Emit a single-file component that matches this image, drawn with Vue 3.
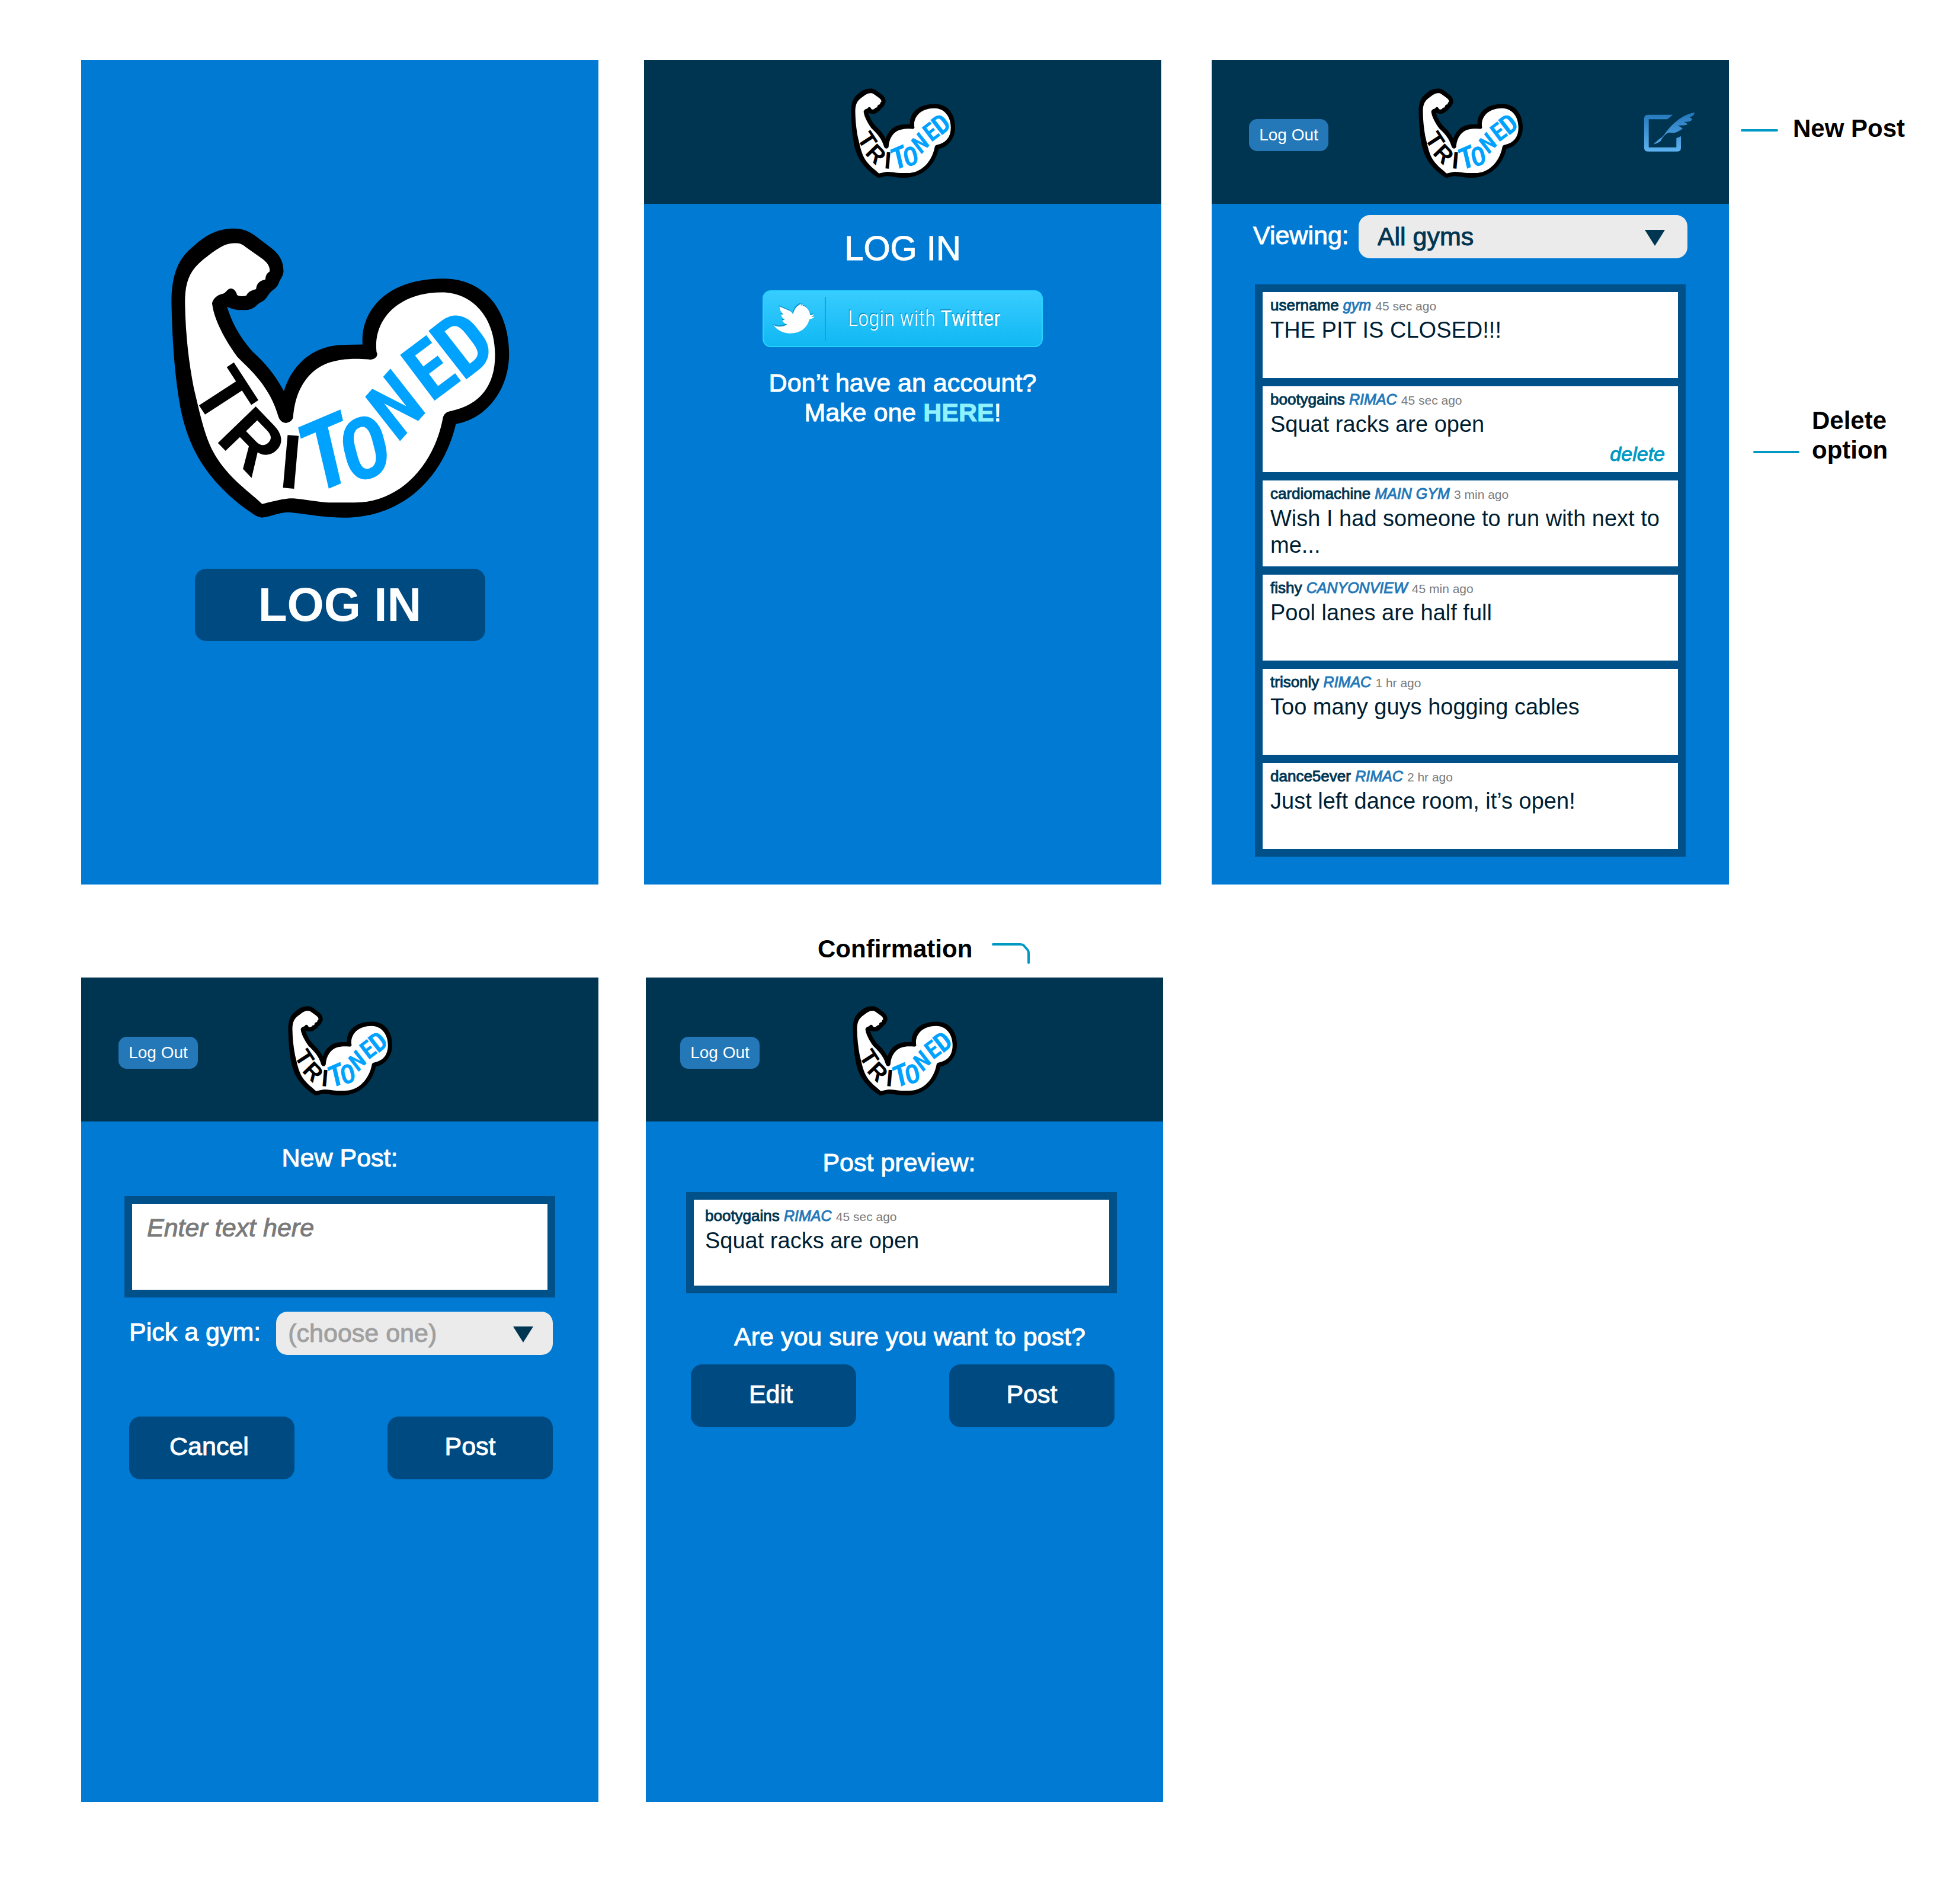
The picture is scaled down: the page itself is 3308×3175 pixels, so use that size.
<script setup>
import { h, ref } from 'vue'

const posts = [
  { user: 'username', gym: 'gym', time: '45 sec ago', text: 'THE PIT IS CLOSED!!!' },
  { user: 'bootygains', gym: 'RIMAC', time: '45 sec ago', text: 'Squat racks are open', own: true },
  { user: 'cardiomachine', gym: 'MAIN GYM', time: '3 min ago', text: 'Wish I had someone to run with next to me...' },
  { user: 'fishy', gym: 'CANYONVIEW', time: '45 min ago', text: 'Pool lanes are half full' },
  { user: 'trisonly', gym: 'RIMAC', time: '1 hr ago', text: 'Too many guys hogging cables' },
  { user: 'dance5ever', gym: 'RIMAC', time: '2 hr ago', text: 'Just left dance room, it’s open!' },
]
const preview = posts[1]
const gyms = ['RIMAC', 'MAIN GYM', 'CANYONVIEW']
const filter = ref('')
const chosenGym = ref('')
const draft = ref('')

const OUTLINE =
  'M330,75C375,75 400,95 420,112L490,175C520,205 537,240 535,290C533,310 520,325 515,345C505,372 485,375 470,405C455,435 440,432 425,450C405,475 385,474 370,474C340,476 320,468 302,458C320,530 350,600 405,675C460,735 500,790 537,872C570,740 660,645 790,645L862,643C852,480 960,320 1195,320C1370,320 1468,480 1468,690C1468,870 1370,1010 1248,1033C1200,1280 1040,1492 785,1492C700,1492 640,1475 560,1466C510,1466 480,1490 445,1492C425,1490 400,1465 380,1450C200,1290 140,1130 110,960C85,800 75,620 72,440C72,300 100,220 165,160C220,100 270,75 330,75Z'
const FILL =
  'M330,147C350,145 365,150 378,165L450,225C470,245 480,262 478,285C465,295 462,305 460,325C445,328 425,335 422,372C405,378 390,382 382,403C370,408 350,408 343,400C340,380 325,365 312,370C300,376 298,388 285,394C265,398 245,415 240,440C245,500 275,590 345,705C400,770 480,850 515,1000C522,1020 535,1028 545,1028C560,1026 573,1015 575,1000C580,920 600,840 655,780C700,730 770,705 885,716C910,722 930,700 920,680C905,520 1010,388 1190,388C1310,388 1408,500 1410,690C1412,840 1350,940 1225,970C1205,975 1200,985 1195,1000C1160,1230 1020,1418 830,1418L720,1418C650,1412 600,1395 555,1398C520,1402 480,1415 447,1425C400,1370 320,1310 260,1200C210,1110 190,980 165,860C145,740 130,600 128,440C128,330 150,280 200,230C245,190 285,147 330,147Z'
const WIDE = '"Liberation Sans", Arial, sans-serif'
const SLIM = '"Roboto Condensed", "Liberation Sans Narrow", "Liberation Sans", sans-serif'
const LETTERS = [
  ['T', 53, 308, 57, 129, 'black'],
  ['R', 106, 391, 46, 129, 'black'],
  ['I', 199, 440, 5, 130, 'black'],
  ['T', 285, 433, -23, 162, 'blue', true],
  ['O', 346, 419, -23, 142, 'blue', true],
  ['N', 413, 332, -48, 132, 'blue', true],
  ['E', 466, 277, -37, 136, 'blue'],
  ['D', 525, 236, -38, 146, 'blue'],
]
const Logo = () =>
  h('svg', { viewBox: '0 0 571 490', role: 'img', 'aria-label': 'TriToned', overflow: 'visible' }, [
    h('g', { transform: 'translate(-28 -24) scale(0.40816 0.34435)' }, [
      h('path', { d: OUTLINE, fill: '#000' }),
      h('path', { d: FILL, fill: '#fff' }),
    ]),
    ...LETTERS.map(([ch, x, y, angle, size, tone, slanted]) =>
      h('text', {
        x: 0, y: 0, 'text-anchor': 'middle', 'font-weight': 700, 'font-size': size,
        'font-family': tone === 'blue' ? SLIM : WIDE,
        'font-style': slanted ? 'italic' : 'normal',
        fill: tone === 'blue' ? '#00a2ff' : '#000',
        transform: `translate(${x} ${y}) rotate(${angle})`,
      }, ch)),
  ])
</script>

<template>
  <main class="board">
    <div class="row first">
      <section class="screen splash" aria-label="Welcome">
        <Logo class="logo-large" />
        <button type="button" class="login">LOG IN</button>
      </section>

      <section class="screen signin" aria-label="Log in">
        <header class="bar"><Logo class="logo" /></header>
        <h1>LOG IN</h1>
        <button type="button" class="twitter">
          <svg class="bird" viewBox="78 95 210 152" aria-hidden="true">
            <path fill="#fff" d="M78,203C95,214 125,216 148,200C130,194 124,186 124,178L136,176C122,166 117,158 118,148L130,150C116,138 110,124 108,108L160,130C168,134 174,140 178,148C184,126 195,102 222,95L218,104L232,97L226,106L234,106C252,114 262,130 266,152L286,150C282,156 278,158 272,160L288,161C282,168 272,172 262,174C250,222 212,247 160,246C125,245 95,228 78,203Z" />
          </svg>
          <span class="twitter-text">Login with <b>Twitter</b></span>
        </button>
        <p class="lead">Don’t have an account?<br />Make one <a href="#signup">HERE</a>!</p>
      </section>

      <section class="screen feed" aria-label="Feed">
        <header class="bar">
          <button type="button" class="logout">Log Out</button>
          <Logo class="logo" />
          <button type="button" class="compose" aria-label="New post">
            <svg viewBox="48 27 255 198" aria-hidden="true">
              <defs>
                <linearGradient id="quill" gradientUnits="userSpaceOnUse" x1="0" y1="27" x2="0" y2="225">
                  <stop offset="0" stop-color="#2377bb" />
                  <stop offset="1" stop-color="#5db2f0" />
                </linearGradient>
              </defs>
              <g fill="url(#quill)">
                <path d="M193,38H66Q48,38 48,56V206Q48,224 66,224H216Q234,224 234,206V147L211,157V203H71V61H165Z" />
                <path d="M303,27C262,32 215,62 180,100C160,122 152,138 140,150C122,162 108,175 95,188C110,184 122,178 132,170C140,152 160,128 178,128C186,130 196,128 204,129C216,124 232,118 243,108C236,102 230,98 218,92C232,92 250,93 266,88C268,82 258,78 250,74C262,74 275,74 285,68C292,64 290,60 288,57L277,50C290,48 302,40 303,27Z" />
              </g>
            </svg>
          </button>
        </header>
        <div class="content">
          <div class="filter">
            <label for="filter">Viewing:</label>
            <span class="picker">
              <select id="filter" v-model="filter">
                <option value="">All gyms</option>
                <option v-for="g in gyms" :key="g">{{ g }}</option>
              </select>
              <svg class="arrow" viewBox="0 0 34 27" aria-hidden="true"><path d="M0,0H34L17,27Z" fill="#003652" /></svg>
            </span>
          </div>
          <ul class="posts">
            <li v-for="post in posts" :key="post.user" class="post">
              <p class="meta"><span class="user">{{ post.user }}</span> <em class="gym">{{ post.gym }}</em> <small>{{ post.time }}</small></p>
              <p class="text">{{ post.text }}</p>
              <button v-if="post.own" type="button" class="delete">delete</button>
            </li>
          </ul>
        </div>
      </section>

      <aside class="notes">
        <p class="note new-post"><i class="line"></i>New Post</p>
        <p class="note delete-option"><i class="line"></i><span>Delete<br />option</span></p>
      </aside>
    </div>

    <div class="row second">
      <p class="note confirmation">
        Confirmation
        <svg class="elbow" viewBox="0 0 64 36" aria-hidden="true">
          <path d="M2,3H48Q52,3 54,5L60,12Q62,14 62,18V34" fill="none" stroke="#0099c3" stroke-width="4" stroke-linecap="round" />
        </svg>
      </p>

      <section class="screen compose-screen" aria-label="New post">
        <header class="bar">
          <button type="button" class="logout">Log Out</button>
          <Logo class="logo" />
        </header>
        <form class="content" @submit.prevent>
          <h2><label for="draft">New Post:</label></h2>
          <textarea id="draft" v-model="draft" placeholder="Enter text here"></textarea>
          <div class="pick">
            <label for="gym">Pick a gym:</label>
            <span class="picker">
              <select id="gym" v-model="chosenGym" class="unset">
                <option value="">(choose one)</option>
                <option v-for="g in gyms" :key="g">{{ g }}</option>
              </select>
              <svg class="arrow" viewBox="0 0 34 27" aria-hidden="true"><path d="M0,0H34L17,27Z" fill="#003652" /></svg>
            </span>
          </div>
          <div class="actions">
            <button type="button" class="action back">Cancel</button>
            <button type="submit" class="action">Post</button>
          </div>
        </form>
      </section>

      <section class="screen confirm-screen" aria-label="Confirm post">
        <header class="bar">
          <button type="button" class="logout">Log Out</button>
          <Logo class="logo" />
        </header>
        <div class="content">
          <h2>Post preview:</h2>
          <div class="posts">
            <article class="post">
              <p class="meta"><span class="user">{{ preview.user }}</span> <em class="gym">{{ preview.gym }}</em> <small>{{ preview.time }}</small></p>
              <p class="text">{{ preview.text }}</p>
            </article>
          </div>
          <p class="question">Are you sure you want to post?</p>
          <div class="actions">
            <button type="button" class="action back">Edit</button>
            <button type="button" class="action">Post</button>
          </div>
        </div>
      </section>
    </div>
  </main>
</template>

<style>
body {
  margin: 0;
  background: #fff;
}
</style>

<style scoped>
.board {
  padding: 101px 0 132px;
  color: #fff;
  font: 43px/50px "Liberation Sans", Arial, sans-serif;
}
.board * {
  box-sizing: border-box;
}
h1, h2, p, ul {
  margin: 0;
  padding: 0;
  font-weight: 400;
  list-style: none;
}
button, select, textarea {
  margin: 0;
  padding: 0;
  border: 0;
  border-radius: 0;
  background: none;
  color: inherit;
  font: inherit;
}
button {
  cursor: pointer;
}

.row {
  display: grid;
}
.first {
  grid-template-columns: 137fr 873fr 77fr 873fr 85fr 873fr 390fr;
}
.second {
  grid-template-columns: 137fr 873fr 80fr 873fr 1345fr;
}
.screen {
  display: flex;
  flex-direction: column;
  min-width: 0;
  aspect-ratio: 873 / 1392;
  background: #007ad2;
}
.splash { grid-column: 2; }
.signin { grid-column: 4; }
.feed { grid-column: 6; }
.notes { grid-column: 7; }
.confirmation { grid-area: 1 / 4; }
.compose-screen { grid-area: 2 / 2; }
.confirm-screen { grid-area: 2 / 4; }

.bar {
  display: grid;
  grid-template-columns: 1fr 176px 1fr;
  align-items: center;
  padding: 48px 58px 44px;
  background: #003552;
}
.logo {
  grid-column: 2;
  grid-row: 1;
  width: 176px;
  height: 151px;
}
.logout {
  justify-self: start;
  width: 134px;
  height: 54px;
  margin: 6px 0 0 5px;
  border-radius: 14px;
  background: #2478b8;
  font-size: 28px;
  line-height: 54px;
}
.confirm-screen .logout {
  margin-left: 0;
}
.compose {
  display: flex;
  justify-self: end;
  margin-bottom: 4px;
}
.compose svg {
  width: 85px;
  height: 66px;
}

.splash {
  align-items: center;
  padding-top: 283px;
}
.logo-large {
  width: 571px;
  height: 490px;
}
.login {
  width: 490px;
  height: 122px;
  margin-top: 86px;
  border-radius: 19px;
  background: #004a82;
  font-size: 80px;
  font-weight: 700;
}

.signin {
  align-items: center;
}
.signin .bar {
  align-self: stretch;
}
h1 {
  margin-top: 45px;
  font-size: 58px;
  line-height: 60px;
  -webkit-text-stroke: 1px;
}
.twitter {
  display: flex;
  align-items: center;
  width: 473px;
  height: 96px;
  margin-top: 41px;
  border: 2px solid #28d2ff;
  border-radius: 14px;
  background: linear-gradient(#38ccff, #10b8f3);
  font: 300 37px/50px "Roboto Condensed", "Liberation Sans Narrow", Roboto, sans-serif;
  text-shadow: -1px -2px 1px #0b8fc4;
}
.bird {
  width: 70px;
  height: 50px;
  margin: 0 17px 0 16px;
  filter: drop-shadow(-1px -2px 0 #0b93c9);
}
.twitter-text {
  padding-left: 37px;
  border-left: 2px solid #10a5dd;
  line-height: 74px;
}
.lead {
  margin-top: 35px;
  text-align: center;
}
.lead a {
  color: #90f2ff;
  font-weight: 700;
  text-decoration: none;
}
.lead, h2, .question, .filter, .pick label, .action, textarea {
  -webkit-text-stroke: 1px;
}

.content {
  padding: 0 73px;
}
.confirm-screen .content {
  padding: 0 78px 0 68px;
}
.filter, .pick {
  display: flex;
  align-items: center;
}
.filter {
  gap: 16px;
  margin: 19px -3px 44px;
}
.filter label, .pick label {
  padding-bottom: 5px;
}
.picker {
  position: relative;
  flex: 1;
  display: flex;
}
select {
  flex: 1;
  min-width: 0;
  height: 73px;
  padding: 0 80px 2px 32px;
  border-radius: 19px;
  background: #ebebeb;
  color: #003652;
  appearance: none;
}
.unset {
  padding-left: 20px;
  color: #a0a0a0;
  -webkit-text-stroke: 1px;
}
.arrow {
  position: absolute;
  top: 25px;
  right: 38px;
  width: 34px;
  height: 27px;
  pointer-events: none;
}
.pick .arrow {
  right: 33px;
}

.posts {
  display: grid;
  gap: 14px;
  padding: 13px;
  background: #00508a;
}
.post {
  display: flex;
  flex-direction: column;
  min-height: 145px;
  padding: 4px 13px 0;
  background: #fff;
  color: #001e32;
}
.meta {
  font-size: 26px;
  line-height: 37px;
}
.user {
  color: #003652;
  -webkit-text-stroke: 1px;
}
.gym {
  color: #2478b8;
  font-size: 25px;
  -webkit-text-stroke: 1px;
}
.meta small {
  color: #7a7a7a;
  font-size: 21px;
}
.text {
  font-size: 38px;
  line-height: 45px;
}
.delete {
  align-self: flex-end;
  margin: auto 9px 14px 0;
  color: #0099c3;
  font-size: 34px;
  font-style: italic;
  line-height: 34px;
  -webkit-text-stroke: 1px;
}

h2 {
  font-size: 43px;
  text-align: center;
}
.compose-screen h2 {
  margin: 36px 0 40px;
}
textarea {
  display: block;
  width: 100%;
  height: 171px;
  padding: 15px 25px;
  border: 13px solid #00508a;
  background: #fff;
  color: #001e32;
  resize: none;
}
textarea::placeholder {
  color: #7a7a7a;
  font-style: italic;
  opacity: 1;
}
.pick {
  gap: 26px;
  padding: 0 4px 0 8px;
  margin: 24px 0 104px;
}
.actions {
  display: flex;
  justify-content: space-between;
  padding: 0 4px 0 8px;
}
.action {
  width: 279px;
  height: 106px;
  padding-bottom: 6px;
  border-radius: 19px;
  background: #004a82;
}
.back {
  padding-right: 9px;
}
.confirm-screen h2 {
  margin: 44px 0 25px;
  padding-right: 8px;
}
.confirm-screen .post {
  padding: 9px 19px 0;
}
.question {
  margin: 48px 0 22px;
  padding-left: 28px;
  text-align: center;
}

.note {
  display: flex;
  align-items: flex-end;
  color: #000;
  font-size: 42px;
  font-weight: 700;
}
.line {
  height: 4px;
  margin-bottom: 20px;
  border-radius: 2px;
  background: #0099c3;
}
.new-post {
  gap: 25px;
  padding: 91px 0 0 20px;
}
.new-post .line {
  width: 63px;
}
.delete-option {
  gap: 21px;
  margin-top: 443px;
  padding-left: 41px;
}
.delete-option .line {
  width: 78px;
}
.confirmation {
  gap: 33px;
  padding: 84px 0 23px 290px;
}
.elbow {
  width: 64px;
  height: 36px;
}
</style>
